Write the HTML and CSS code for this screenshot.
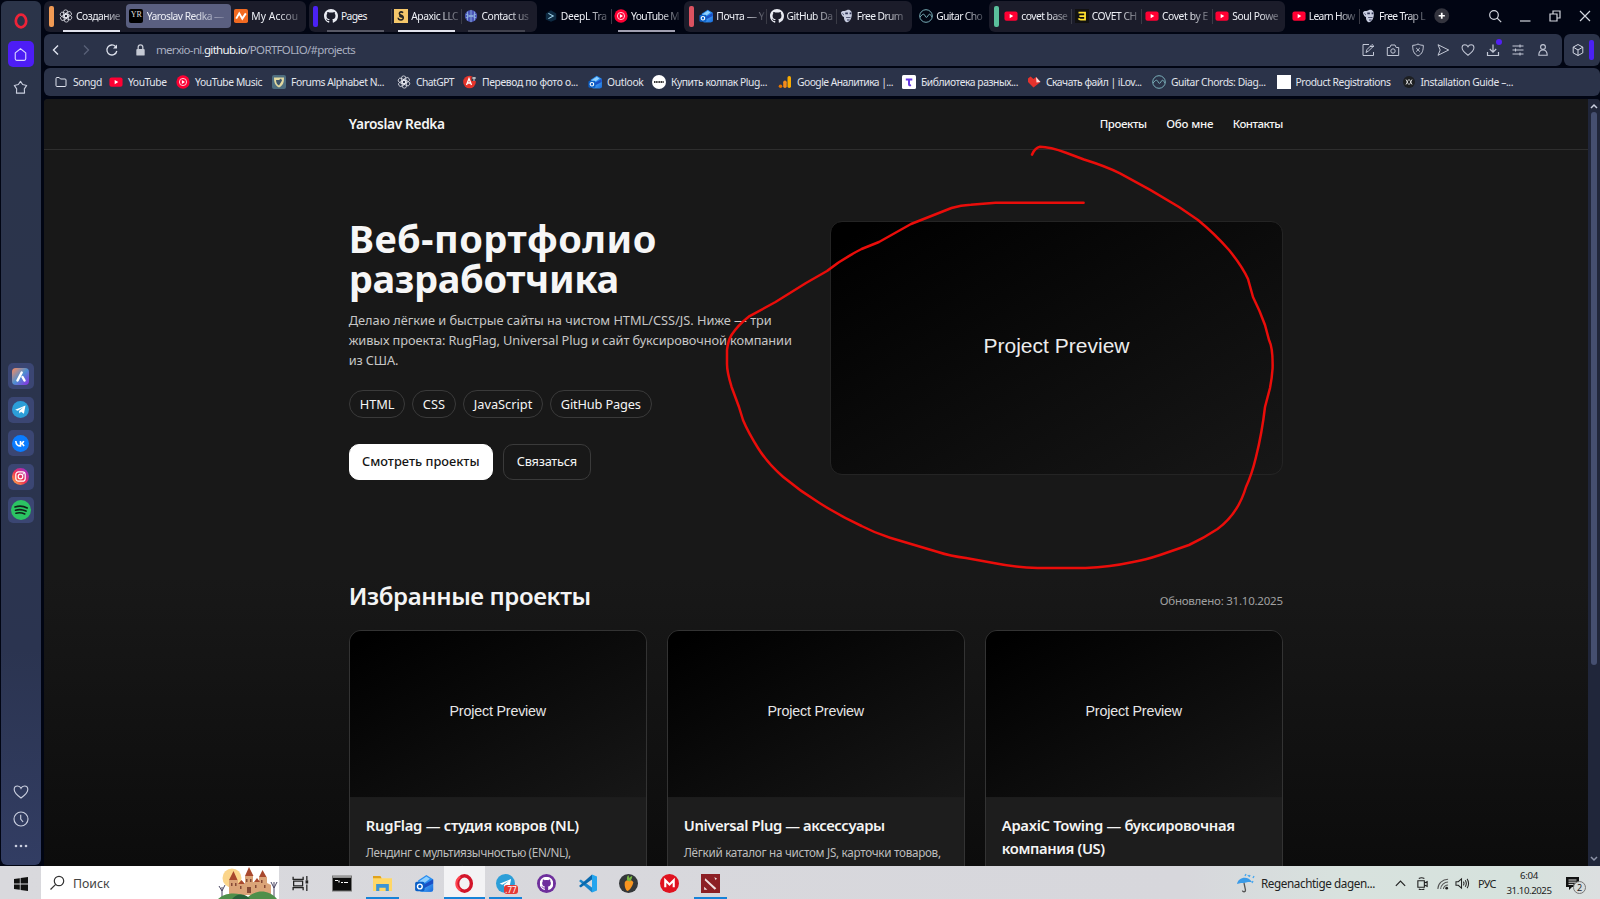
FILE: index.html
```html
<!DOCTYPE html>
<html lang="ru">
<head>
<meta charset="utf-8">
<title>Yaroslav Redka — Портфолио</title>
<link rel="stylesheet" href="styles.css">
</head>
<body>
<svg class="defs" aria-hidden="true">
  <defs>
    <linearGradient id="insta" x1="0" y1="1" x2="1" y2="0"><stop offset="0" stop-color="#ffc24a"/><stop offset=".45" stop-color="#f0304f"/><stop offset="1" stop-color="#8a2be8"/></linearGradient>
    <linearGradient id="aria" x1="0" y1="0" x2="1" y2="1"><stop offset="0" stop-color="#ff8a5c"/><stop offset=".5" stop-color="#4d8fd0"/><stop offset="1" stop-color="#8a2be2"/></linearGradient>
    <linearGradient id="mailg" x1="0" y1="0" x2="1" y2="1"><stop offset="0" stop-color="#62c4ff"/><stop offset="1" stop-color="#1668dd"/></linearGradient>
  </defs>
  <symbol id="gpt" viewBox="0 0 16 16"><g fill="none" stroke="currentColor" stroke-width=".85"><rect x="5.1" y="1" width="5" height="9" rx="2.5" transform="rotate(0 8 8)"/><rect x="5.1" y="1" width="5" height="9" rx="2.5" transform="rotate(60 8 8)"/><rect x="5.1" y="1" width="5" height="9" rx="2.5" transform="rotate(120 8 8)"/><rect x="5.1" y="1" width="5" height="9" rx="2.5" transform="rotate(180 8 8)"/><rect x="5.1" y="1" width="5" height="9" rx="2.5" transform="rotate(240 8 8)"/><rect x="5.1" y="1" width="5" height="9" rx="2.5" transform="rotate(300 8 8)"/></g></symbol>
  <symbol id="github" viewBox="0 0 16 16"><path fill="currentColor" d="M8 0C3.58 0 0 3.58 0 8c0 3.54 2.29 6.53 5.47 7.59.4.07.55-.17.55-.38 0-.19-.01-.82-.01-1.49-2.01.37-2.53-.49-2.69-.94-.09-.23-.48-.94-.82-1.13-.28-.15-.68-.52-.01-.53.63-.01 1.08.58 1.23.82.72 1.21 1.87.87 2.33.66.07-.52.28-.87.51-1.07-1.78-.2-3.64-.89-3.64-3.95 0-.87.31-1.59.82-2.15-.08-.2-.36-1.02.08-2.12 0 0 .67-.21 2.2.82.64-.18 1.32-.27 2-.27s1.36.09 2 .27c1.53-1.04 2.2-.82 2.2-.82.44 1.1.16 1.92.08 2.12.51.56.82 1.27.82 2.15 0 3.07-1.87 3.75-3.65 3.95.29.25.54.73.54 1.48 0 1.07-.01 1.93-.01 2.2 0 .21.15.46.55.38A8.01 8.01 0 0 0 16 8c0-4.42-3.58-8-8-8z"/></symbol>
  <symbol id="yt" viewBox="0 0 16 16"><rect x=".5" y="2.8" width="15" height="10.6" rx="2.4" fill="#ff0033"/><path d="M6.5 5.7v4.8L10.6 8z" fill="#fff"/></symbol>
  <symbol id="ytm" viewBox="0 0 16 16"><circle cx="8" cy="8" r="7.6" fill="#ff0033"/><circle cx="8" cy="8" r="4.1" fill="none" stroke="#fff" stroke-width=".9"/><path d="M6.7 5.8v4.4L10.3 8z" fill="#fff"/></symbol>
  <symbol id="mail" viewBox="0 0 16 16"><path d="M3 5.500 10 .8l5.700 3.600V13a2 2 0 0 1-2 2H5z" fill="#2a8df0"/><path d="M4 6 10 2l3 2-8 6z" fill="#8fd0ff"/><path d="m6 11 9.700-6v8a2 2 0 0 1-2 2H6z" fill="url(#mailg)"/><path d="M7 9.500 15.700 4.400V8L8 12z" fill="#1b4fc4"/><rect x=".5" y="6.500" width="8" height="8" rx="1.500" fill="#0b5fc6"/><circle cx="4.500" cy="10.500" r="2" fill="none" stroke="#fff" stroke-width="1.200"/></symbol>
  <symbol id="guitar" viewBox="0 0 16 16"><g fill="none" stroke="currentColor" stroke-width="1.1"><circle cx="8" cy="8" r="7.2"/><path d="M1.2 9c2-1.500 2.300-3 4-3S7 9.500 8.500 9.500 10.500 6 12 6s1.500 2 3 3.200"/></g></symbol>
  <symbol id="drum" viewBox="0 0 16 16"><path d="M1 4c2-3 4-1 7-3 4-1 6 2 5.500 6-.5 4-2 7-5 8-3 0-4-3-4-6-2 0-3-3-3.500-5z" fill="#c8cde0"/><path d="M6 4h3v2H6zm5 0h2v2h-2zM7 9h5v1H7zm1 3h3v1H8zM1.500 4l3 2v1z" fill="#2b3050"/></symbol>
  <symbol id="heart" viewBox="0 0 16 16"><path fill="none" stroke="currentColor" stroke-width="1.150" d="M8 14C4 11 1.200 8.600 1.200 5.400 1.200 3.300 2.700 2 4.500 2 6 2 7.300 2.800 8 4.300 8.700 2.800 10 2 11.500 2c1.800 0 3.300 1.300 3.300 3.400C14.800 8.600 12 11 8 14z"/></symbol>
  <symbol id="plane" viewBox="0 0 16 16"><circle cx="8" cy="8" r="8" fill="#2c9ed8"/><path d="M3 8.200 12.700 4.200 11.200 12 8.500 10.200 7 11.800 6.600 9.300 11 5.700 5.400 9.100z" fill="#fff"/></symbol>
</svg>

<div class="browser">
  <aside class="side">
    <svg class="side-o" viewBox="0 0 14 16"><ellipse cx="7" cy="8" rx="5.200" ry="6.300" fill="none" stroke="#ee2338" stroke-width="2.700"/></svg>
    <div class="side-home"><svg viewBox="0 0 16 16" width="15" height="15"><path d="m8 1.800 5.600 4.500v6.300a1.600 1.600 0 0 1-1.600 1.600H4a1.600 1.600 0 0 1-1.600-1.600V6.300z" fill="none" stroke="#d9d2ff" stroke-width="1.200" stroke-linejoin="round"/></svg></div>
    <svg class="side-star" viewBox="0 0 16 16"><path d="m8 1.500 2.300 3.300 4.300 1-2.500 3.700.2 4.500H3.700l.2-4.500L1.400 5.800l4.300-1z" fill="none" stroke="#c9cede" stroke-width="1.200" stroke-linejoin="round"/></svg>
    <div class="apps">
      <div class="app"><svg viewBox="0 0 17 17"><rect width="17" height="17" rx="4" fill="url(#aria)"/><path d="m5.500 12.500 4.200-8M10.500 9l2 3.500" stroke="#fff" stroke-width="2.500" stroke-linecap="round"/></svg></div>
      <div class="app"><svg><use href="#plane"/></svg></div>
      <div class="app"><svg viewBox="0 0 17 17"><circle cx="8.500" cy="8.500" r="8.500" fill="#0a7cff"/><path d="M3.800 6c.2 3 1.700 5 4.700 5V6m0 2.500c1.500 0 2.700-1 3.200-2.500M8.500 8.500c1.500 0 2.800 1 3.500 2.600" fill="none" stroke="#fff" stroke-width="1.600"/></svg></div>
      <div class="app"><svg viewBox="0 0 17 17"><circle cx="8.500" cy="8.500" r="8.500" fill="url(#insta)"/><rect x="3.800" y="3.800" width="9.400" height="9.400" rx="2.800" fill="none" stroke="#fff" stroke-width="1.200"/><circle cx="8.500" cy="8.500" r="2.300" fill="none" stroke="#fff" stroke-width="1.200"/><circle cx="11.300" cy="5.700" r=".7" fill="#fff"/></svg></div>
      <div class="app"><svg class="big" viewBox="0 0 20 20"><circle cx="10" cy="10" r="10" fill="#2bc463"/><path d="M4 7c4-1.300 8.500-1 12.200 1M4.500 10.200c3.500-1 7-.7 10.500.9M5 13.200c3-.8 6-.5 8.800.8" fill="none" stroke="#102218" stroke-width="1.600" stroke-linecap="round"/></svg></div>
    </div>
    <div class="side-foot">
      <svg><use href="#heart"/></svg>
      <svg viewBox="0 0 16 16"><g fill="none" stroke="currentColor" stroke-width="1.150"><circle cx="8" cy="8" r="7"/><path d="M7.700 3.800V8l2.400 3"/></g></svg>
      <svg viewBox="0 0 16 16"><g fill="currentColor"><circle cx="3" cy="8" r="1.300"/><circle cx="8" cy="8" r="1.300"/><circle cx="13" cy="8" r="1.300"/></g></svg>
    </div>
  </aside>

  <div class="main">
    <div class="tabs">
      <div class="group g1"><i class="pill orange"></i>
        <div class="tab ul bright"><svg><use href="#gpt"/></svg><span data-w="44">Создание</span></div>
        <div class="tab active"><b class="yr">YR</b><span data-w="77">Yaroslav Redka —</span></div>
        <div class="tab"><svg viewBox="0 0 16 16"><rect width="16" height="16" rx="2" fill="#f26a21"/><path d="m2.500 11 3.500-6 3.500 6L13.500 5" fill="none" stroke="#fff" stroke-width="2.200"/></svg><span data-w="47">My Accou</span></div>
      </div>
      <div class="group g2"><i class="pill violet"></i>
        <div class="tab ul dim"><svg><use href="#github"/></svg><span data-w="26">Pages</span></div>
        <div class="tab sep ul bright"><svg viewBox="0 0 16 16"><rect width="16" height="16" fill="#f5c76a"/><path d="M10.500 4.200C7 2 4.500 5 7.500 7c4 1 4 5.500.5 5.500-2 0-3.500-1-3-2.500M7.500 7c-2 1 0 2.500 2 2" fill="none" stroke="#222" stroke-width="1.800"/></svg><span data-w="47">Apaxic LLC</span></div>
        <div class="tab sep ul dark"><svg viewBox="0 0 16 16"><circle cx="8" cy="8" r="7" fill="#4b56b8"/><path d="M4 3v10M8 1v14M12 3v10M2 6l12 4M2 10l12-4" stroke="#9cc4e4" stroke-width=".8"/></svg><span data-w="47">Contact us</span></div>
      </div>
      <div class="group plain">
        <div class="tab"><svg viewBox="0 0 16 16"><path d="M8 1.500 14 5v7L8 14.500 2 12V5z" fill="#0d2a42"/><path d="m5 5 5.500 3L5 11" fill="none" stroke="#9fd3ea" stroke-width="1.300"/></svg><span data-w="46">DeepL Tra</span></div>
        <div class="tab sep ul mid"><svg><use href="#ytm"/></svg><span data-w="48">YouTube M</span></div>
      </div>
      <div class="group g3"><i class="pill red"></i>
        <div class="tab"><svg><use href="#mail"/></svg><span data-w="48">Почта — Y</span></div>
        <div class="tab sep"><svg><use href="#github"/></svg><span data-w="46">GitHub Da</span></div>
        <div class="tab sep"><svg><use href="#drum"/></svg><span data-w="46">Free Drum</span></div>
      </div>
      <div class="group plain">
        <div class="tab"><svg class="teal"><use href="#guitar"/></svg><span data-w="46">Guitar Cho</span></div>
      </div>
      <div class="group g4"><i class="pill green"></i>
        <div class="tab"><svg><use href="#yt"/></svg><span data-w="46">covet base</span></div>
        <div class="tab sep"><svg viewBox="0 0 16 16"><rect width="16" height="16" fill="#111"/><path d="M4 4h7.500v4.200M5 8h6.500v4.200H6.500c-1.300 0-2-.5-2.500-1.500" fill="none" stroke="#ffe22e" stroke-width="2"/></svg><span data-w="45">COVET CH</span></div>
        <div class="tab sep"><svg><use href="#yt"/></svg><span data-w="46">Covet by E</span></div>
        <div class="tab sep"><svg><use href="#yt"/></svg><span data-w="46">Soul Powe</span></div>
      </div>
      <div class="group plain">
        <div class="tab"><svg><use href="#yt"/></svg><span data-w="46">Learn How</span></div>
        <div class="tab sep"><svg><use href="#drum"/></svg><span data-w="46">Free Trap L</span></div>
      </div>
      <div class="plus"><svg viewBox="0 0 16 16"><circle cx="8" cy="8" r="7.700" fill="#33343e"/><path d="M8 4.800v6.400M4.800 8h6.400" stroke="#fff" stroke-width="1.800"/></svg></div>
      <div class="win">
        <svg viewBox="0 0 14 14"><g fill="none" stroke="currentColor" stroke-width="1.200"><circle cx="6" cy="6" r="4.300"/><path d="m9.200 9.200 4 4"/></g></svg>
        <svg viewBox="0 0 14 14"><path d="M2 12h10.500" stroke="currentColor" stroke-width="1.200"/></svg>
        <svg viewBox="0 0 14 14"><path d="M2 5h7v7H2zM5 5V2h7v7H9" fill="none" stroke="currentColor" stroke-width="1.200"/></svg>
        <svg viewBox="0 0 14 14"><path d="m2 2 10 10M12 2 2 12" stroke="currentColor" stroke-width="1.200"/></svg>
      </div>
    </div>

    <div class="toolrow">
      <div class="toolbar">
        <svg class="nav-i" viewBox="0 0 14 14"><path d="M9 2.500 4.500 7 9 11.500" fill="none" stroke="#dfe3ee" stroke-width="1.400"/></svg>
        <svg class="nav-i" viewBox="0 0 14 14"><path d="M5 2.500 9.500 7 5 11.500" fill="none" stroke="#596178" stroke-width="1.300"/></svg>
        <svg class="nav-i reload" viewBox="0 0 14 14"><path d="M11.800 8A5 5 0 1 1 10.500 3.500" fill="none" stroke="#dfe3ee" stroke-width="1.300"/><path d="M12 1.500V5.500H8z" fill="#dfe3ee"/></svg>
        <svg class="lock" viewBox="0 0 14 14"><rect x="2.500" y="6" width="9" height="7" rx="1" fill="#c5c9d4"/><path d="M4.500 6V4a2.500 2.500 0 0 1 5 0v2" fill="none" stroke="#c5c9d4" stroke-width="1.400"/></svg>
        <div class="url" data-w="199">merxio-nl.<em>github.io</em>/PORTFOLIO/#projects</div>
        <div class="acts">
          <svg viewBox="0 0 14 14"><path d="M8 1.500H2v11h10.500V9M5 9.500l1-3L11 1.500 12.700 3 7.500 8zM9 3.500h4" fill="none" stroke="currentColor"/></svg>
          <svg viewBox="0 0 14 14"><g fill="none" stroke="currentColor"><path d="M1.300 4.500h2.500l1.200-2.500h4l1.200 2.500h2.500v8H1.300z"/><circle cx="7" cy="8" r="2.200"/></g></svg>
          <svg viewBox="0 0 14 14"><path d="M7 1c2 1 3.500 1.300 5.300 1.300 0 5.200-.8 8.400-5.300 10.700C2.500 10.700 1.700 7.500 1.700 2.300 3.500 2.300 5 2 7 1zM5.200 5l3.600 3.600m0-3.600L5.200 8.600" fill="none" stroke="currentColor"/></svg>
          <svg viewBox="0 0 14 14"><path d="M2 1.700 12.700 7 2 12.300 4.200 7z" fill="none" stroke="currentColor" stroke-linejoin="round"/></svg>
          <svg><use href="#heart"/></svg>
          <div class="dl"><svg viewBox="0 0 14 14"><path d="M7 1.500V9M3.800 6 7 9.200 10.200 6M1.500 9v3.500h11V9" fill="none" stroke="currentColor" stroke-width="1.200"/></svg><i></i></div>
          <svg viewBox="0 0 14 14"><path d="M1.500 3h11M1.500 7h11M1.500 11h11M9 1.500v3M4.500 5.500v3M9 9.500v3" stroke="currentColor" stroke-width="1.100"/></svg>
          <svg viewBox="0 0 14 14"><g fill="none" stroke="currentColor" stroke-width="1.100"><circle cx="7" cy="4" r="2.400"/><path d="M2.800 12.300c0-7 8.400-7 8.400 0z"/></g></svg>
        </div>
      </div>
      <div class="cube"><svg viewBox="0 0 14 14"><path d="m7 1.500 4.800 2.600v5.800L7 12.500 2.200 9.900V4.100zM2.200 4.100 7 7l4.800-2.900M7 7v5.500" fill="none" stroke="#d4d8e4"/></svg><i></i></div>
    </div>

    <div class="marks">
      <div class="mark m1"><svg viewBox="0 0 14 14"><path d="M2 3.500a1 1 0 0 1 1-1h2.200l1.300 1.500h4.500a1 1 0 0 1 1 1v5.500a1 1 0 0 1-1 1H3a1 1 0 0 1-1-1z" fill="none" stroke="#dfe3ee"/></svg><span data-w="29">Songd</span></div>
      <div class="mark m2"><svg><use href="#yt"/></svg><span data-w="38.5">YouTube</span></div>
      <div class="mark m3"><svg><use href="#ytm"/></svg><span data-w="67">YouTube Music</span></div>
      <div class="mark m4"><svg viewBox="0 0 14 14"><rect width="14" height="14" rx="2" fill="#4e6e80"/><path d="M2 2.500h10c0 5-1 8-5 10-4-2-5-5-5-10z" fill="#e2d9a0"/><path d="M4 5h3l2-1.500 1 2-3 5C5.500 10 4 8 4 5z" fill="#3e566b"/></svg><span data-w="93">Forums Alphabet N...</span></div>
      <div class="mark m5"><svg><use href="#gpt"/></svg><span data-w="38">ChatGPT</span></div>
      <div class="mark m6"><svg viewBox="0 0 14 14"><circle cx="6.500" cy="7" r="6.300" fill="#e5342b"/><path d="m3.500 10 2.500-6.500L8.500 10M4.500 8h3" fill="none" stroke="#fff" stroke-width="1.300"/><path d="M8.500 1.500h5v4.500h-5z" fill="#303848"/><path d="M9 3h4M11 2v4" stroke="#fff" stroke-width=".8"/></svg><span data-w="96">Перевод по фото о...</span></div>
      <div class="mark m7"><svg><use href="#mail"/></svg><span data-w="36.5">Outlook</span></div>
      <div class="mark m8"><svg viewBox="0 0 14 14"><circle cx="7" cy="7" r="7" fill="#fff"/><path d="M2 7h10" stroke="#333" stroke-width="2" stroke-dasharray="1.200 .5"/></svg><span data-w="96">Купить колпак Plug...</span></div>
      <div class="mark m9"><svg viewBox="0 0 14 14"><rect x="9.500" y="1" width="3.500" height="12" rx="1.700" fill="#f9ab00"/><rect x="5.200" y="5.500" width="3.500" height="7.500" rx="1.700" fill="#f28b1d"/><circle cx="2.500" cy="11.300" r="1.800" fill="#e37400"/></svg><span data-w="96">Google Аналитика |...</span></div>
      <div class="mark m10"><svg viewBox="0 0 14 14"><rect width="14" height="14" rx="1.500" fill="#fff"/><path d="M3.800 4.500h6.500M7 4.500v4.800c0 1 .8 1.200 2 .8" fill="none" stroke="#6438e0" stroke-width="2"/></svg><span data-w="97">Библиотека разных...</span></div>
      <div class="mark m11"><svg viewBox="0 0 14 14"><path d="M6.500 12.500 1 7V3.500L3.500 1.500 6.500 4 9 2l4.500 5z" fill="#e5322d"/><path d="m9 2 4.500 5-4 .5z" fill="#ffdcdc"/></svg><span data-w="95.5">Скачать файл | iLov...</span></div>
      <div class="mark m12"><svg class="teal"><use href="#guitar"/></svg><span data-w="94.5">Guitar Chords: Diag...</span></div>
      <div class="mark m13"><svg viewBox="0 0 14 14"><rect width="14" height="14" fill="#fff"/></svg><span data-w="95">Product Registrations</span></div>
      <div class="mark m14"><svg viewBox="0 0 14 14"><circle cx="7" cy="7" r="6" fill="#1d1f22"/><path d="m4 4.500 2.500 5M6.500 4.500 4 9.500M10 4.500l-2.500 5M7.500 4.500l2.500 5" stroke="#dcdcdc" stroke-width=".9"/></svg><span data-w="92.5">Installation Guide –...</span></div>
    </div>

    <div class="view">
      <div class="page">
        <header class="head"><div class="wrap">
          <strong data-w="96">Yaroslav Redka</strong>
          <nav><a data-w="47">Проекты</a><a data-w="47">Обо мне</a><a data-w="50">Контакты</a></nav>
        </div></header>
        <section class="hero wrap">
          <div>
            <h1><span data-w="308">Веб-портфолио</span><br><span data-w="270">разработчика</span></h1>
            <p><span data-w="423">Делаю лёгкие и быстрые сайты на чистом HTML/CSS/JS. Ниже — три</span><br><span data-w="443">живых проекта: RugFlag, Universal Plug и сайт буксировочной компании</span><br><span data-w="49.5">из США.</span></p>
            <div class="chips"><span><u data-w="34.500">HTML</u></span><span><u data-w="22.500">CSS</u></span><span><u data-w="58.500">JavaScript</u></span><span><u data-w="80">GitHub Pages</u></span></div>
            <div class="btns"><a class="primary"><u data-w="117.500">Смотреть проекты</u></a><a><u data-w="60">Связаться</u></a></div>
          </div>
          <div class="preview"><span data-w="146">Project Preview</span></div>
        </section>
        <section class="wrap">
          <div class="sec-head"><h2 data-w="242">Избранные проекты</h2><small data-w="123">Обновлено: 31.10.2025</small></div>
          <div class="cards">
            <article><div class="thumb"><span data-w="96.500">Project Preview</span></div><div class="body"><h3><span data-w="213">RugFlag — студия ковров (NL)</span></h3><p><span data-w="205">Лендинг с мультиязычностью (EN/NL),</span><br>анимации и удобная форма</p></div></article>
            <article><div class="thumb"><span data-w="96.500">Project Preview</span></div><div class="body"><h3><span data-w="201">Universal Plug — аксессуары</span></h3><p><span data-w="257">Лёгкий каталог на чистом JS, карточки товаров,</span><br>HTML/CSS, корзина в заказ. Без сервера</p></div></article>
            <article><div class="thumb"><span data-w="96.500">Project Preview</span></div><div class="body"><h3><span data-w="233">ApaxiC Towing — буксировочная</span><br><span data-w="103">компания (US)</span></h3></div></article>
          </div>
        </section>
      </div>
      <div class="scroll">
        <svg viewBox="0 0 10 8"><path d="m2 6 3-3 3 3" fill="none" stroke="#c9cede" stroke-width="1.500"/></svg>
        <i></i>
        <svg viewBox="0 0 10 8"><path d="m2 2 3 3 3-3" fill="none" stroke="#8d93a8" stroke-width="1.500"/></svg>
      </div>
    </div>
  </div>
</div>

<svg class="pen" viewBox="0 0 1600 899"><path d="M1032 154.700C1034 150 1036 147.500 1040 146.800Q1050 147 1066 152.700L1084 159.500Q1105 166 1120 173.300Q1150 189 1179 207L1198 220Q1215 234 1229 250Q1242 266 1248 279L1253 297Q1260 311 1265 325L1269 340Q1273 348 1272.600 368Q1272 378 1270 388L1265 407Q1262 433 1256 457Q1252 474 1246 487Q1238 514 1217.500 529Q1204 538 1189 545L1160 555Q1145 560 1133 562Q1110 567 1085.500 568H1037.600Q1013 567 993.600 563L966 558Q950 556 938 552L890 537.700Q875 533 861.600 526Q840 516 819.500 503Q800 491 783 476.700Q768 464 758 448Q748 432 743 420L739 407L731.500 386.700Q727 372 727 364V350Q728 341 731.500 335Q738 325 748.700 316.700Q761 310 775.500 302L806 283L827 271Q842 259 861.600 249L879 242L911 224L951.500 208Q961 205 970.700 204.700L995.500 202.700H1083.600"/></svg>

<footer class="taskbar">
  <div class="start"><svg viewBox="0 0 14 14"><path d="m0 2 5.800-.8v5.400H0zM6.600 1.100 14 0v6.600H6.600zM0 7.400h5.800v5.400L0 12zM6.600 7.400H14V14l-7.400-1.100z" fill="#111"/></svg></div>
  <div class="search">
    <svg viewBox="0 0 16 16"><g fill="none" stroke="#333" stroke-width="1.200"><circle cx="10" cy="6" r="4.700"/><path d="M6.700 9.300 1.500 14.500"/></g></svg>
    <span data-w="36.500">Поиск</span>
    <svg class="castle" viewBox="0 0 60 32"><circle cx="14" cy="11" r="9.500" fill="#fbd58b"/><path d="M11 28V13h9v4h7V9h8v6h6V10h8v6l4 2v10z" fill="#dba478"/><path d="m11 13 4.500-9 4 9zM27 9 31 0l4.500 9zM41 10 44.500 3l4 7zM20 17l3.500-4 3.500 4zM36 15l3-4 3 4z" fill="#a8482d"/><path d="M13 16h1.500v3H13zm4 0h1.500v3H17zm5 3h1.500v3H22zm6-7h1.500v3H28zm4 0h1.500v3H32zm5 6h1.500v3H37zm6-5h1.500v3H43zm3 5h1.500v3H46zM29 20h4v6h-4z" fill="#854936"/><path d="M4 32V20M1 19l3 5 3-6M56 30V15M53 15l3 6 3-6" stroke="#4b4763" fill="none"/><path d="M0 32c6-6 18-8 30-2 8-7 20-8 29 2z" fill="#4f8f4a"/><path d="M14 32c6-7 14-5 18 0z" fill="#28633a"/></svg>
  </div>
  <div class="task"><svg viewBox="0 0 18 18"><g fill="none" stroke="#222" stroke-width="1.200"><path d="M2 2.500V5h9.500V2.500M2 15.500V13h9.500v2.500M2.500 6.800h8.500v4.400H2.500zM15 2v4M15 10v6"/></g><rect x="13.800" y="6" width="2.500" height="3" fill="#222"/></svg></div>
  <div class="task"><svg class="wide" viewBox="0 0 20 18"><rect x=".5" y="1.500" width="19" height="15" fill="#0c0c0c" stroke="#777"/><path d="M1 2.500h18" stroke="#bbb" stroke-width="1.500"/><path d="M3 6h3M7 6v2M9 8h2M12 8h4" stroke="#fff" stroke-width="1.200"/></svg></div>
  <div class="task run"><svg viewBox="0 0 18 18"><path d="M0 2h7l1.500 2H18v12H0z" fill="#ffd766"/><path d="M0 2h7l1 2H0z" fill="#e0a21d"/><path d="M3 16V9.500h12V16h-3v-3H6v3z" fill="#3b94d4"/></svg></div>
  <div class="task"><svg class="wide"><use href="#mail"/></svg></div>
  <div class="task run on"><svg viewBox="0 0 18 18"><ellipse cx="9" cy="9" rx="6.500" ry="7.300" fill="none" stroke="#d3162b" stroke-width="3.200"/><path d="M5 2.500C0 6 0 12 5 15.500" stroke="#ff4550" stroke-width="2" fill="none"/></svg></div>
  <div class="task run"><svg><use href="#plane"/></svg><b class="badge">.77</b></div>
  <div class="task gh"><svg viewBox="0 0 18 18"><circle cx="9" cy="9" r="9" fill="#6e2f9c"/><svg x="2.500" y="2.500" width="13" height="13"><use href="#github"/></svg></svg></div>
  <div class="task"><svg class="wide" viewBox="0 0 20 18"><path d="M14 0v18L1 6.500 2.800 5 14 13z" fill="#1b86cc"/><path d="M14 0 1 11.500 2.800 13 14 5z" fill="#0a69ad"/><path d="m14 0 5 2v14l-5 2z" fill="#25a5ee"/></svg></div>
  <div class="task"><svg viewBox="0 0 18 18"><circle cx="9" cy="9" r="9" fill="#35383a"/><path d="M5.500 8c1-3 7-3 8 0-.5 3-3 7-5.500 8-2-1-3-5-2.500-8z" fill="#f9951f"/><path d="M8 6.500c-1-2-.5-4 .8-5.500.5 1 .7 2 .7 3 1-1 2-2 3-2 0 2-1 4-2 5z" fill="#79b942"/></svg></div>
  <div class="task"><svg viewBox="0 0 18 18"><circle cx="9" cy="9" r="9" fill="#e0121f"/><path d="M5 12.500V6l4 4 4-4v6.500" fill="none" stroke="#fff" stroke-width="2"/></svg></div>
  <div class="task run"><svg viewBox="0 0 18 18"><rect width="18" height="18" fill="#8c1f24"/><path d="m4 4 10.500 9.500L13 15 3.500 6zM12.500 3l2.500 1-1 2zM3 12l3 3H3z" fill="#f0dede"/></svg></div>
  <div class="tray">
    <svg class="umb" viewBox="0 0 20 20"><path d="M1 11C2 4 12 2 16 9l-4 0-4 1-3 0z" fill="#3a9be8"/><path d="m8 10 1.500 7c.2 2-2.800 2.500-3 .5" fill="none" stroke="#555" stroke-width="1.300"/><path d="m9 3 1-2m3 3 1-2m3 3 1-2m-2 7 1-2m-5-5 .5-1" stroke="#4aa8ef" stroke-width="1.400"/></svg>
    <span class="weather" data-w="114">Regenachtige dagen...</span>
    <svg class="chev" viewBox="0 0 14 14"><path d="m2 9.500 5-5 5 5" fill="none" stroke="#222" stroke-width="1.300"/></svg>
    <svg class="cam" viewBox="0 0 14 14"><path d="M2 4h7v7H2zM9 6.500l3-1.500v5l-3-1.500M3 1.500q3-1.500 6 0M3 13q3 1.500 6 0" fill="none" stroke="#222" stroke-width="1.200"/></svg>
    <svg class="wifi" viewBox="0 0 14 14"><path d="M2 13C2 7 7 2.500 13 2.500M5 13c0-4 4-7.500 8-7.500M8 13c0-2.500 2.500-4.500 5-4.500" fill="none" stroke="#555" stroke-width="1.100"/><circle cx="11.500" cy="12" r="1.500" fill="#222"/></svg>
    <svg class="vol" viewBox="0 0 16 14"><path d="M1.500 5h2.500l3.500-3v10L4 9H1.500zM9.500 5q1.300 2 0 4M11.500 3.500q2.300 3.500 0 7M13.500 2q3.200 5 0 10" fill="none" stroke="#222" stroke-width="1.100"/></svg>
    <span class="lang" data-w="18">РУС</span>
    <div class="clock"><span data-w="18">6:04</span><span data-w="45">31.10.2025</span></div>
    <div class="note"><svg viewBox="0 0 14 14"><path d="M0 1h13v10H6l-3 3v-3H0z" fill="#111"/><path d="M2.500 4h8M2.500 6.200h8M2.500 8.400h5" stroke="#ddd"/></svg><b>2</b></div>
  </div>
</footer>
<script src="fit.js"></script>
</body>
</html>
```

FILE: fit.js
```js
// Track each label so that its glyphs span the width given in data-w.
document.querySelectorAll('[data-w]').forEach(function (el) {
  var range = document.createRange();
  range.selectNodeContents(el);
  var natural = range.getBoundingClientRect().width;
  var n = el.textContent.length;
  el.style.letterSpacing = ((parseFloat(el.dataset.w) - natural) / n).toFixed(3) + 'px';
});
```

FILE: styles.css
```css
* { box-sizing: border-box; }
body { margin: 0; width: 1600px; height: 899px; overflow: hidden; background: #010513; font-family: "Noto Sans", "Open Sans", sans-serif; color: #e9ebf2; display: flex; flex-direction: column; }
svg { display: block; flex: none; }
i, em { font-style: normal; }
u { text-decoration: none; }
.defs { width: 0; height: 0; position: absolute; }
.browser { flex: none; height: 866px; display: flex; gap: 3.500px; padding-left: 1px; }

.side { width: 39.500px; height: 864px; margin-top: 1px; flex: none; border-radius: 6px; background: linear-gradient(#2b3449 0%, #2b3450 75%, #323d63 100%); display: flex; flex-direction: column; align-items: center; color: #c9cede; }
.side-o { width: 14px; height: 16px; margin-top: 12px; }
.side-home { width: 26px; height: 26px; margin-top: 12px; border-radius: 5px; background: #4d1df5; display: grid; place-items: center; }
.side-star { width: 15px; height: 15px; margin-top: 13px; }
.apps { margin-top: 268px; display: flex; flex-direction: column; gap: 7.500px; }
.app { width: 26px; height: 26px; border-radius: 5px; background: #3b4673; display: grid; place-items: center; }
.app svg { width: 17px; height: 17px; }
.app svg.big { width: 20px; height: 20px; }
.side-foot { margin-top: auto; padding-bottom: 11px; display: flex; flex-direction: column; gap: 11px; }
.side-foot svg { width: 16px; height: 16px; }

.main { flex: 1; min-width: 0; display: flex; flex-direction: column; }
.tabs { height: 34px; flex: none; display: flex; gap: 3.400px; padding-top: 1px; align-items: flex-start; }
.group { height: 30.500px; display: flex; align-items: center; background: #1b1c2a; border-radius: 6px; padding: 0 4.500px; flex: none; }
.g1 { width: 261.500px; }
.g2, .g3 { width: 228px; }
.g4 { width: 295.500px; }
.plain { background: none; padding: 0; }
.pill { width: 5px; height: 21px; border-radius: 2px; margin-right: 2px; flex: none; }
.orange { background: #f19a54; } .violet { background: #4b22f4; } .red { background: #dc5260; } .green { background: #5abf9b; }
.tab { position: relative; width: 70.300px; height: 100%; flex: none; display: flex; align-items: center; gap: 3px; padding-left: 3.500px; }
.tab svg, .yr { width: 14px; height: 14px; }
.tab span { flex: 1; overflow: hidden; white-space: nowrap; font-size: 10.300px; line-height: 16px; color: #eef0f6; -webkit-mask-image: linear-gradient(90deg, #000 55%, rgba(0,0,0,.3) 92%, transparent); mask-image: linear-gradient(90deg, #000 55%, rgba(0,0,0,.3) 92%, transparent); }
.g2 .tab:nth-child(2) span { -webkit-mask-image: none; mask-image: none; }
.tab.active { width: 105px; height: 24px; background: #5a5f80; border-radius: 4px; gap: 3.500px; padding-right: 3px; }
.yr { background: #000; color: #ddd; font: 8px/12px "Liberation Serif", serif; text-align: center; border-radius: 2px; }
.sep::before { content: ""; position: absolute; left: 0; top: 8px; height: 15px; width: 1px; background: #3a3b46; }
.ul::after { content: ""; position: absolute; left: 7px; bottom: 0; width: 57px; height: 2px; background: #585966; }
.ul.bright::after { background: #dfe0ea; } .ul.dark::after { background: #41424e; } .ul.mid::after { background: #a09fb0; }
.teal { color: #7db4bd; }
.plus { height: 30px; margin-left: 2px; display: grid; place-items: center; }
.plus svg { width: 15.500px; height: 15.500px; }
.win { margin-left: auto; height: 30px; display: flex; align-items: center; gap: 16px; padding-right: 8px; color: #d3d6de; }
.win svg { width: 14px; height: 14px; }

.toolrow { height: 32px; flex: none; display: flex; gap: 2px; }
.toolbar { width: 1517.500px; background: #2b3349; border-radius: 6px; display: flex; align-items: center; padding-left: 4.500px; padding-right: 12px; }
.nav-i { width: 14px; height: 14px; margin-right: 16px; }
.reload { margin-right: 15px; margin-left: -4px; }
.lock { width: 13px; height: 14px; margin-right: 9.500px; }
.url { font-size: 11.500px; line-height: 18px; color: #a9afc0; white-space: nowrap; }
.url em { color: #f1f3f8; }
.acts { margin-left: auto; display: flex; gap: 11px; color: #c3c8d6; }
.acts svg { width: 14px; height: 14px; }
.dl { position: relative; }
.dl i { position: absolute; right: -2px; top: -4px; width: 6px; height: 6px; border-radius: 50%; background: #5220f5; }
.cube { flex: 1; background: #2b3349; border-radius: 6px; display: flex; align-items: center; padding-left: 7px; gap: 4px; }
.cube svg { width: 14px; height: 14px; }
.cube i { width: 5px; height: 20px; background: #4b22f4; border-radius: 2px; }
.marks { height: 28px; margin: 1.500px 0 3px; flex: none; background: #2b3349; border-radius: 6px; display: flex; align-items: center; padding-left: 10px; }
.mark { display: flex; align-items: center; gap: 5px; flex: none; }
.mark svg { width: 14px; height: 14px; }
.mark span { font-size: 10.300px; line-height: 16px; white-space: nowrap; color: #e3e6ee; }
.m1 { width: 55px; } .m2 { width: 67px; } .m3 { width: 96px; } .m4 { width: 125px; } .m5 { width: 66px; } .m6 { width: 125px; } .m7 { width: 64px; } .m8 { width: 126px; } .m9 { width: 124px; } .m10 { width: 125px; } .m11 { width: 125px; } .m12 { width: 124.500px; } .m13 { width: 125px; } .m14 { width: 125px; }

.view { flex: 1; min-height: 0; display: flex; overflow: hidden; border-radius: 4px 4px 0 0; background: #181818; }
.page { width: 1543.500px; height: 767px; overflow: hidden; background: linear-gradient(#181818 0, #181818 480px, #111 650px, #0c0c0c 767px); color: #f4f4f4; }
.wrap { width: 934px; margin: 0 auto; }
.head { height: 51.500px; border-bottom: 1px solid #2e2e2e; }
.head .wrap { height: 51px; display: flex; justify-content: space-between; align-items: center; }
.head strong { font-size: 13.700px; line-height: 20px; font-weight: 600; }
.head nav { display: flex; gap: 19.500px; font-size: 11.500px; line-height: 18px; font-weight: 500; }
.hero { height: 429.500px; padding-top: 67.500px; display: grid; grid-template-columns: 1fr 1fr; gap: 29px; align-items: start; }
h1, h2, h3, p { margin: 0; white-space: nowrap; }
h1 { font-size: 38px; line-height: 40px; font-weight: 700; color: #f6f6f6; }
.hero p { margin-top: 12px; font-size: 12.800px; line-height: 20.100px; color: #c6c6c6; }
.chips { margin-top: 20px; display: flex; gap: 6.500px; font-size: 12.800px; }
.chips span { height: 28.500px; line-height: 26.500px; padding: 0 10px; border: 1px solid #3a3a3a; border-radius: 15px; white-space: nowrap; }
.btns { margin-top: 26px; display: flex; gap: 10px; font-size: 12.800px; }
.btns a { height: 35.500px; width: 88px; line-height: 33px; text-align: center; border: 1px solid #3a3a3a; border-radius: 10px; white-space: nowrap; }
.btns .primary { width: 144px; background: #fff; border-color: #fff; color: #141414; font-weight: 500; line-height: 32px; }
.preview { margin-top: 3px; height: 254px; padding-bottom: 3px; border: 1px solid #242424; border-radius: 12px; background: linear-gradient(150deg, #000 5%, #0b0b0b 50%, #171717 100%); display: grid; place-items: center; font: 21px "Liberation Sans", Arial, sans-serif; color: #ececec; }
.preview span { white-space: nowrap; }
.sec-head { display: flex; justify-content: space-between; align-items: flex-start; height: 50px; }
h2 { font-size: 24px; line-height: 32px; font-weight: 600; }
.sec-head small { font-size: 11.500px; line-height: 18px; margin-top: 12px; color: #a0a0a0; white-space: nowrap; }
.cards { display: grid; grid-template-columns: repeat(3, 1fr); gap: 20px; }
article { height: 300px; border: 1px solid #333; border-radius: 12px; overflow: hidden; background: #1d1d1d; }
.thumb { height: 167px; padding-bottom: 5px; background: linear-gradient(150deg, #000 5%, #0b0b0b 50%, #171717 100%); border-bottom: 1px solid #1c1c1c; display: grid; place-items: center; font: 14.300px "Liberation Sans", Arial, sans-serif; color: #e6e6e6; white-space: nowrap; }
.body { padding: 16px 16px; }
h3 { font-size: 14.800px; line-height: 23px; font-weight: 600; }
.body p { margin-top: 6.500px; font-size: 11.700px; line-height: 18.500px; color: #bdbdbd; }
.scroll { flex: 1; height: 767px; background: #20263a; display: flex; flex-direction: column; align-items: center; padding: 3px 0; }
.scroll svg { width: 10px; height: 8px; }
.scroll i { width: 6px; height: 553px; margin: 2px 0 auto; border-radius: 3px; background: #454f70; }

.pen { position: absolute; left: 0; top: 0; width: 1600px; height: 899px; pointer-events: none; }
.pen path { fill: none; stroke: #ea0d0a; stroke-width: 2.500; stroke-linecap: round; stroke-linejoin: round; }

.taskbar { height: 33px; flex: none; display: flex; background: linear-gradient(90deg, #d9d9dd 0, #d7d7dc 74%, #d8e2de 84%, #d6e2dd 95%, #dcdfe0); color: #222; }
.start { width: 41px; display: grid; place-items: center; padding-top: 2px; }
.start svg { width: 14px; height: 14px; }
.search { width: 238px; margin-right: 1px; background: #fff; display: flex; align-items: center; padding-left: 8px; }
.search > svg:first-child { width: 16px; height: 16px; }
.search span { margin-left: 8px; padding-top: 1px; font-size: 12.300px; color: #444; }
.search .castle { width: 60px; height: 32px; margin: 1px 1px 0 auto; }
.task { position: relative; width: 41px; display: grid; place-items: center; padding-top: 1px; color: #fff; }
.task svg { width: 19px; height: 19px; }
.task svg.wide { width: 20px; height: 19px; }
.task svg svg { width: 13px; height: 13px; }
.run::after { content: ""; position: absolute; left: 4px; right: 4px; bottom: 0; height: 2px; background: #1683d8; }
.on { background: #f3f3f5; } .on::after { left: 0; right: 0; }
.badge { position: absolute; left: 19px; top: 19px; width: 14px; height: 9px; border-radius: 3px; background: #e53935; color: #fff; font: 8px/9px "Noto Sans", sans-serif; text-align: center; }
.tray { margin-left: auto; padding-top: 1px; display: flex; align-items: center; width: 364px; white-space: nowrap; font-size: 11.700px; }
.umb { width: 20px; height: 20px; }
.weather { width: 133px; margin-left: 5px; }
.chev { width: 13px; height: 13px; margin-right: 9px; }
.cam { width: 13px; height: 13px; margin-right: 7px; }
.wifi { width: 13px; height: 13px; margin-right: 5px; }
.vol { width: 16px; height: 13px; margin-right: 8px; }
.lang { width: 27px; font-size: 10.800px; }
.clock { width: 48px; display: flex; flex-direction: column; align-items: center; font-size: 9.700px; line-height: 15px; }
.note { position: relative; margin-left: 13px; }
.note svg { width: 14px; height: 14px; }
.note b { position: absolute; left: 7px; top: 5px; width: 13px; height: 13px; border: 1px solid #777; border-radius: 50%; background: #d8dcdc; font: 9px/11px "Noto Sans", sans-serif; text-align: center; }
```
